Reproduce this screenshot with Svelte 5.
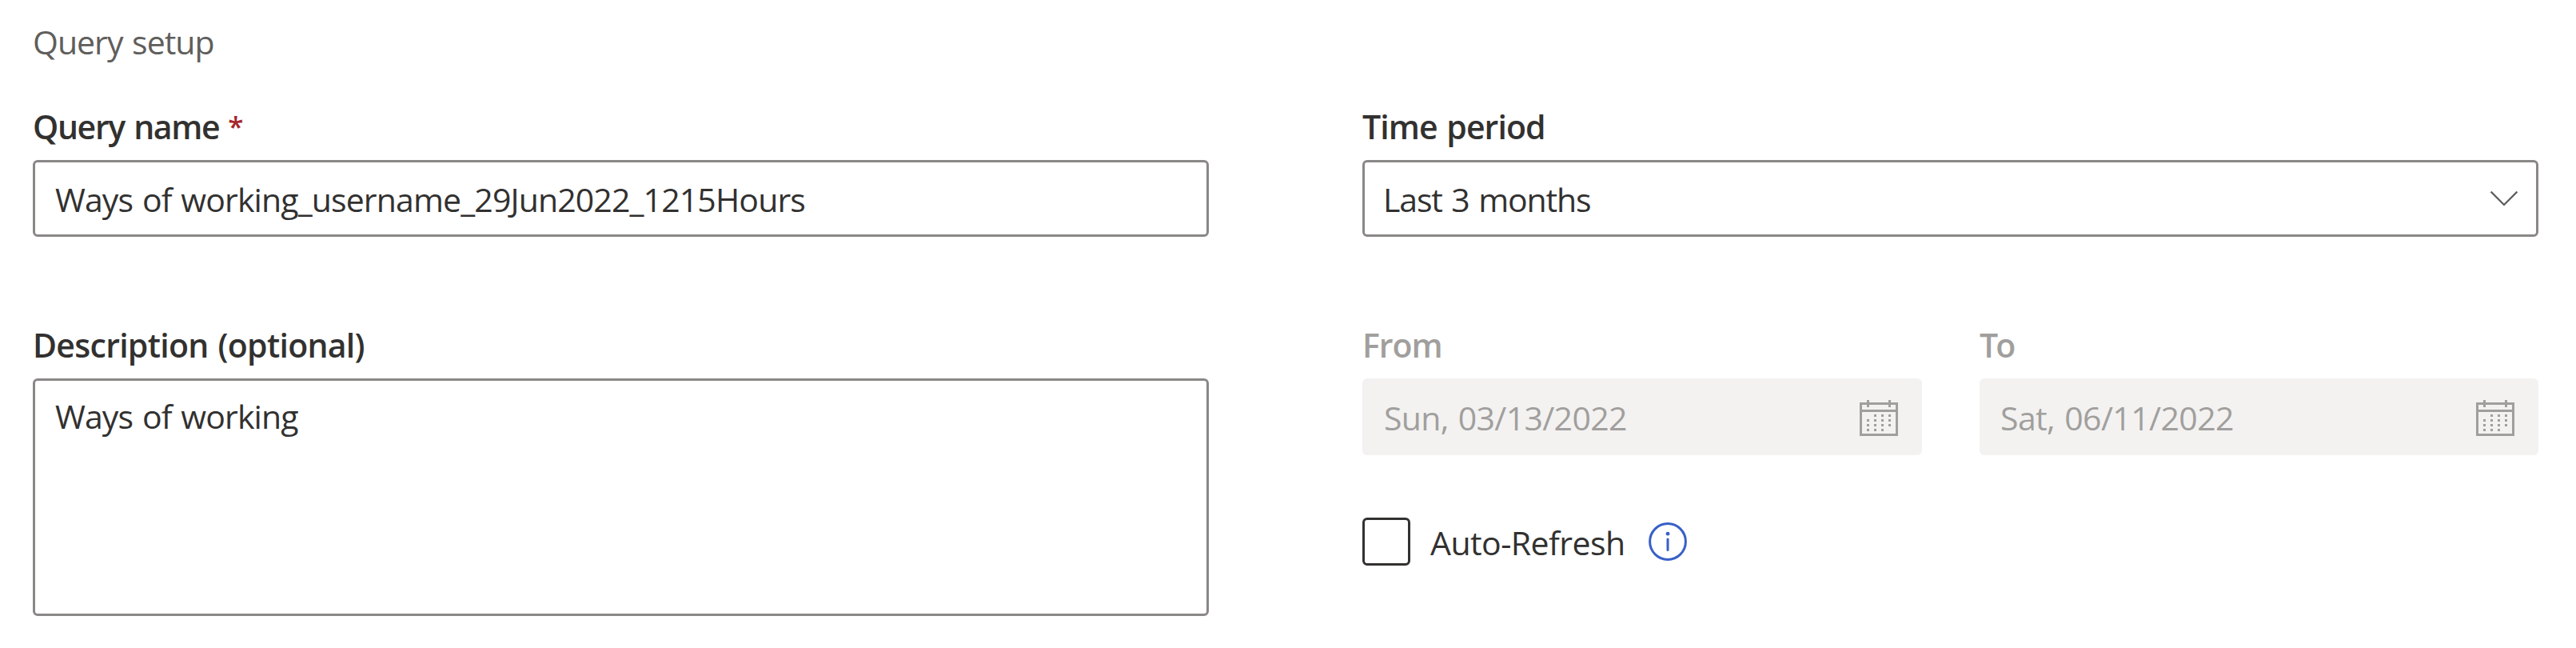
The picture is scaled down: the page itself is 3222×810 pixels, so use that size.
<script>
  const dots = [
    [18, 18], [27, 18], [36, 18],
    [9, 24], [18, 24], [27, 24], [36, 24],
    [9, 30], [18, 30], [27, 30], [36, 30],
    [9, 36], [18, 36], [27, 36]
  ];
</script>

{#snippet calendar()}
  <svg class="calendar" width="48" height="45" viewBox="0 0 48 45" fill="#a19f9d" aria-hidden="true">
    <path fill-rule="evenodd" d="M0 3H48V45H0ZM3 6V12H45V6ZM3 15V42H45V15Z" />
    <path d="M9 0h3v9H9ZM36 0h3v9h-3Z" />
    {#each dots as [x, y]}
      <rect {x} {y} width="3" height="3" />
    {/each}
  </svg>
{/snippet}

<main>
  <h1><span class="setup">Query setup</span></h1>
  <div class="columns">
    <section>
      <div class="label"><span class="query">Query name</span><span class="required">*</span></div>
      <div class="field"><span class="ways">Ways of working</span><span class="suffix">_username_29Jun2022_1215Hours</span></div>
      <div class="label second"><span class="desc">Description (optional)</span></div>
      <div class="area"><span class="ways">Ways of working</span></div>
    </section>
    <section>
      <div class="label"><span class="time">Time period</span></div>
      <div class="field select">
        <span class="last">Last 3 months</span>
        <svg class="chevron" width="36" height="20" viewBox="0 0 36 20" fill="none" stroke="#605e5c" stroke-width="2.2" aria-hidden="true"><path d="M1.6 1.6L18 18L34.4 1.6" /></svg>
      </div>
      <div class="dates">
        <div>
          <div class="label off"><span class="from">From</span></div>
          <div class="date"><span class="sun">Sun, 03/13/2022</span>{@render calendar()}</div>
        </div>
        <div>
          <div class="label off"><span class="to">To</span></div>
          <div class="date end"><span class="sat">Sat, 06/11/2022</span>{@render calendar()}</div>
        </div>
      </div>
      <div class="refresh">
        <div class="box"></div>
        <span class="auto">Auto-Refresh</span>
        <svg class="info" width="48" height="48" viewBox="0 0 48 48" aria-hidden="true">
          <circle cx="24" cy="24" r="22.4" fill="none" stroke="#3860c8" stroke-width="3" />
          <circle cx="24" cy="14.2" r="2.4" fill="#3860c8" />
          <path d="M24 21V34.6" stroke="#3860c8" stroke-width="3" stroke-linecap="round" />
        </svg>
      </div>
    </section>
  </div>
</main>

<style>
  :global(body) { background: #fff; }
  main {
    box-sizing: border-box;
    height: 810px;
    padding: 24px 47px 0 41px;
    font: 400 41px/56px "Open Sans", "Noto Sans", sans-serif;
    color: #323130;
    word-spacing: 2px;
    white-space: nowrap;
  }
  h1 { margin: 0 0 50px; font: inherit; color: #605e5c; }
  .columns { display: grid; grid-template-columns: 1471px 1471px; column-gap: 192px; }
  .label { display: flex; height: 56px; margin-bottom: 14px; font-weight: 600; }
  .second { margin-top: 107px; }
  .off { color: #a19f9d; }
  .required { margin-left: 11px; font-size: 35px; color: #a4262c; }
  .field, .area { box-sizing: border-box; display: flex; border: 3px solid #8a8886; border-radius: 6px; }
  .field { height: 96px; padding: 18px 22px 0 25px; }
  .select { justify-content: space-between; padding-left: 23px; }
  .chevron { margin-top: 17px; }
  .area { height: 297px; padding: 16px 25px; }
  .dates { display: grid; grid-template-columns: 700px 699px; column-gap: 72px; margin-top: 107px; }
  .date {
    box-sizing: border-box;
    display: flex;
    justify-content: space-between;
    height: 96px;
    padding: 21px 30px 0 27px;
    border-radius: 6px;
    background: #f3f2f1;
    color: #a19f9d;
  }
  .end { padding-left: 26px; }
  .calendar { margin-top: 6px; }
  .refresh { display: flex; align-items: center; height: 60px; margin-top: 78px; }
  .box { box-sizing: border-box; width: 60px; height: 60px; border: 3px solid #323130; border-radius: 6px; }
  .auto { width: 273px; margin: 2px 0 0 25px; letter-spacing: -0.55px; }
  .setup { letter-spacing: -0.98px; }
  .query { letter-spacing: -1.35px; }
  .ways { letter-spacing: -0.89px; }
  .suffix { letter-spacing: -0.86px; }
  .desc { letter-spacing: -0.71px; }
  .time { letter-spacing: -0.93px; }
  .last { letter-spacing: -1.13px; }
  .from { letter-spacing: -1px; }
  .to { letter-spacing: -3px; }
  .sun { letter-spacing: -0.66px; }
  .sat { letter-spacing: -0.59px; }
</style>
